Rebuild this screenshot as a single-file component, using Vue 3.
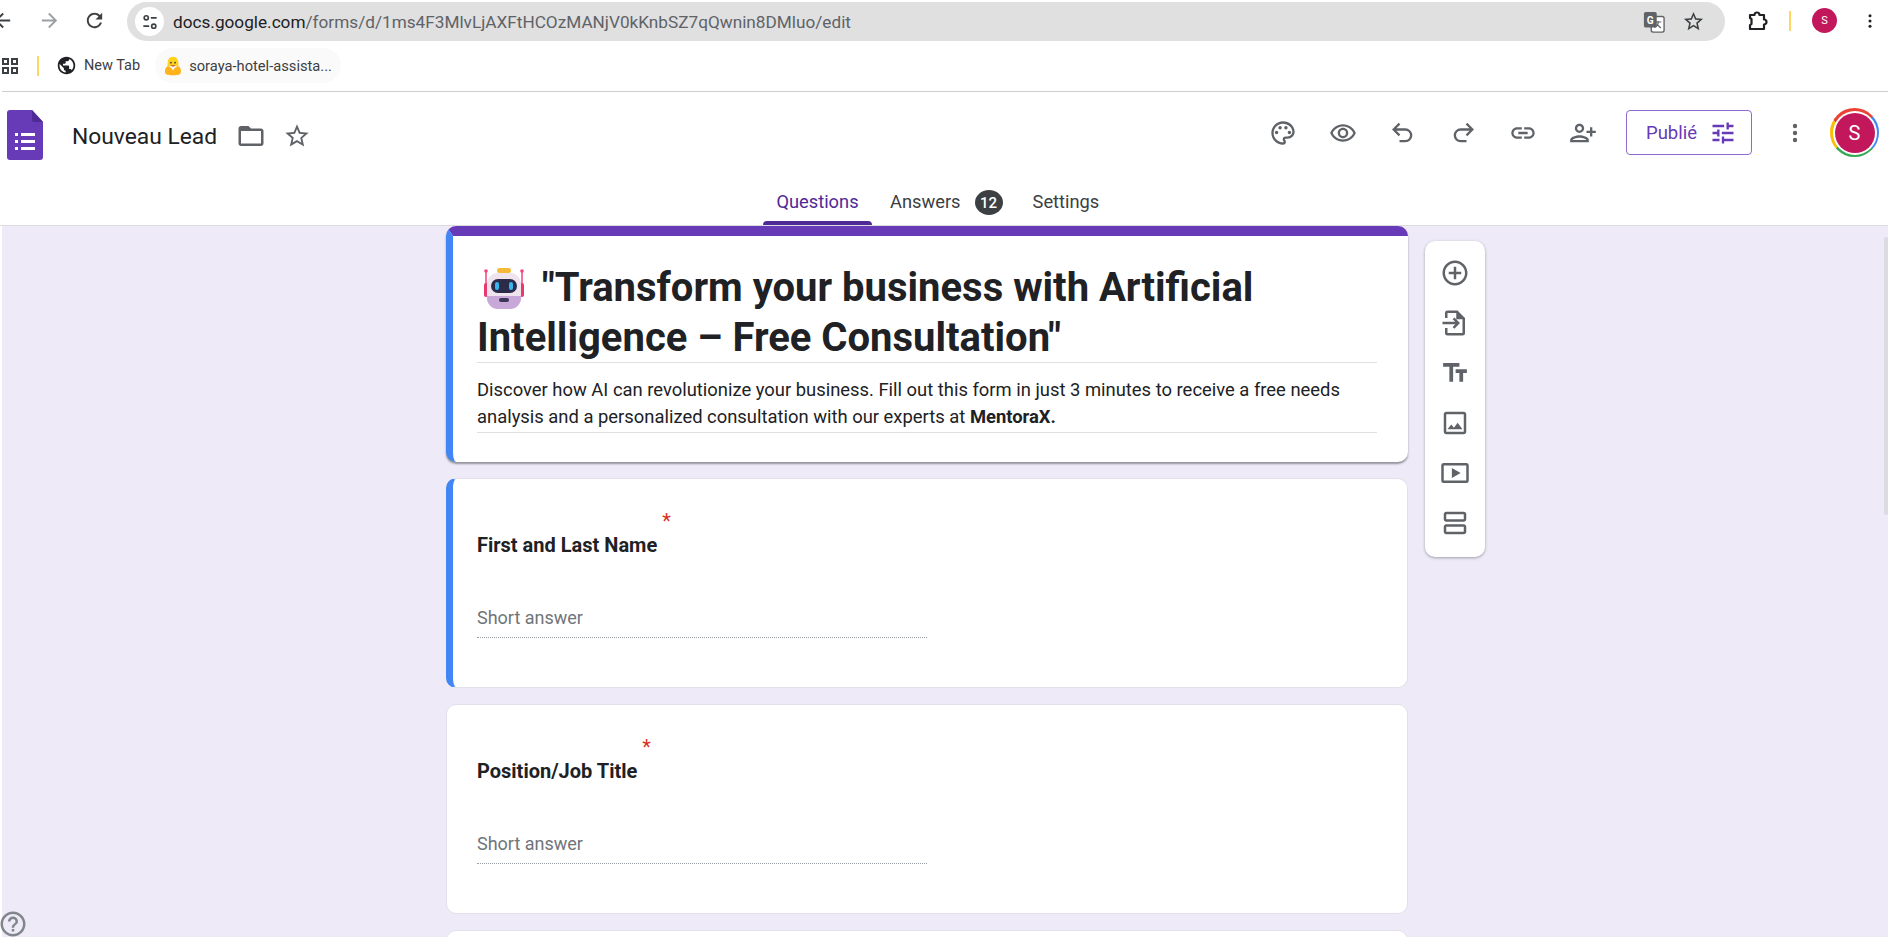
<script setup>
// Material icon paths used around the page
const ICONS = {
  back: 'M20 11H7.83l5.59-5.59L12 4l-8 8 8 8 1.41-1.41L7.83 13H20v-2z',
  forward: 'M4 11h12.17l-5.59-5.59L12 4l8 8-8 8-1.41-1.41L16.17 13H4v-2z',
  reload: 'M17.65 6.35C16.2 4.9 14.21 4 12 4c-4.42 0-7.99 3.58-7.99 8s3.57 8 7.99 8c3.73 0 6.84-2.55 7.73-6h-2.08c-.82 2.33-3.04 4-5.65 4-3.31 0-6-2.69-6-6s2.69-6 6-6c1.66 0 3.14.69 4.22 1.78L13 11h7V4l-2.35 2.35z',
  star: 'M22 9.24l-7.19-.62L12 2 9.19 8.63 2 9.24l5.46 4.73L5.82 21 12 17.27 18.18 21l-1.63-7.03L22 9.24zM12 15.4l-3.76 2.27 1-4.28-3.32-2.88 4.38-.38L12 6.1l1.71 4.04 4.38.38-3.32 2.88 1 4.28L12 15.4z',
  globe: 'M12 2C6.48 2 2 6.48 2 12s4.48 10 10 10 10-4.48 10-10S17.52 2 12 2zm-1 17.93c-3.95-.49-7-3.85-7-7.93 0-.62.08-1.21.21-1.79L9 15v1c0 1.1.9 2 2 2v1.93zm6.9-2.54c-.26-.81-1-1.39-1.9-1.39h-1v-3c0-.55-.45-1-1-1H8v-2h2c.55 0 1-.45 1-1V7h2c1.1 0 2-.9 2-2v-.41c2.93 1.19 5 4.06 5 7.41 0 2.08-.8 3.97-2.1 5.39z',
  folder: 'M20 6h-8l-2-2H4c-1.1 0-1.99.9-1.99 2L2 18c0 1.1.9 2 2 2h16c1.1 0 2-.9 2-2V8c0-1.1-.9-2-2-2zm0 12H4V8h16v10z',
  tune: 'M3 17v2h6v-2H3zM3 5v2h10V5H3zm10 16v-2h8v-2h-8v-2h-2v6h2zM7 9v2H3v2h4v2h2V9H7zm14 4v-2H11v2h10zm-6-4h2V7h4V5h-4V3h-2v6z',
  help: 'M11 18h2v-2h-2v2zm1-16C6.48 2 2 6.48 2 12s4.48 10 10 10 10-4.48 10-10S17.52 2 12 2zm0 18c-4.41 0-8-3.59-8-8s3.59-8 8-8 8 3.59 8 8-3.59 8-8 8zm0-14c-2.21 0-4 1.79-4 4h2c0-1.1.9-2 2-2s2 .9 2 2c0 2-3 1.75-3 5h2c0-2.25 3-2.5 3-5 0-2.21-1.79-4-4-4z'
}

const toolbarTop = [
  { name: 'palette', d: 'M12 22C6.49 22 2 17.51 2 12S6.49 2 12 2s10 4.04 10 9c0 3.31-2.69 6-6 6h-1.77c-.28 0-.5.22-.5.5 0 .12.05.23.13.33.41.47.64 1.06.64 1.67A2.5 2.5 0 0 1 12 22zm0-18c-4.41 0-8 3.59-8 8s3.59 8 8 8c.28 0 .5-.22.5-.5a.54.54 0 0 0-.14-.35c-.41-.46-.63-1.05-.63-1.65a2.5 2.5 0 0 1 2.5-2.5H16c2.21 0 4-1.79 4-4 0-3.86-3.59-7-8-7zM6.5 10a1.5 1.5 0 1 1 0 3 1.5 1.5 0 0 1 0-3zm3-4a1.5 1.5 0 1 1 0 3 1.5 1.5 0 0 1 0-3zm5 0a1.5 1.5 0 1 1 0 3 1.5 1.5 0 0 1 0-3zm3 4a1.5 1.5 0 1 1 0 3 1.5 1.5 0 0 1 0-3z' },
  { name: 'eye', d: 'M12 6.5c3.79 0 7.17 2.13 8.82 5.5-1.65 3.37-5.02 5.5-8.82 5.5S4.83 15.37 3.18 12C4.83 8.63 8.21 6.5 12 6.5m0-2C7 4.5 2.73 7.61 1 12c1.73 4.39 6 7.5 11 7.5s9.27-3.11 11-7.5c-1.73-4.39-6-7.5-11-7.5zm0 5a2.5 2.5 0 0 1 0 5 2.5 2.5 0 0 1 0-5m0-2c-2.48 0-4.5 2.02-4.5 4.5s2.02 4.5 4.5 4.5 4.5-2.02 4.5-4.5-2.02-4.5-4.5-4.5z' },
  { name: 'undo', d: 'M8.3 3.3l1.4 1.4L6.4 8H14a6 6 0 0 1 0 12H9v-2h5a4 4 0 0 0 0-8H6.4l3.3 3.3-1.4 1.4L2.6 9z' },
  { name: 'redo', d: 'M15.7 3.3l-1.4 1.4L17.6 8H10a6 6 0 0 0 0 12h5v-2h-5a4 4 0 0 1 0-8h7.6l-3.3 3.3 1.4 1.4L21.4 9z' },
  { name: 'link', d: 'M3.9 12c0-1.71 1.39-3.1 3.1-3.1h4V7H7c-2.76 0-5 2.24-5 5s2.24 5 5 5h4v-1.9H7c-1.71 0-3.1-1.39-3.1-3.1zM8 13h8v-2H8v2zm9-6h-4v1.9h4c1.71 0 3.1 1.39 3.1 3.1s-1.39 3.1-3.1 3.1h-4V17h4c2.76 0 5-2.24 5-5s-2.24-5-5-5z' },
  { name: 'person-add', d: 'M9 12c2.21 0 4-1.79 4-4s-1.79-4-4-4-4 1.79-4 4 1.79 4 4 4zm0-6c1.1 0 2 .9 2 2s-.9 2-2 2-2-.9-2-2 .9-2 2-2zm0 8c-2.67 0-8 1.34-8 4v2h16v-2c0-2.66-5.33-4-8-4zm-6 4c.2-.71 3.3-2 6-2 2.69 0 5.78 1.28 6 2H3zm15-3v-3h-3v-2h3V7h2v3h3v2h-3v3h-2z' }
]

const sideTools = [
  { name: 'add', d: 'M13 7h-2v4H7v2h4v4h2v-4h4v-2h-4V7zm-1-5C6.48 2 2 6.48 2 12s4.48 10 10 10 10-4.48 10-10S17.52 2 12 2zm0 18c-4.41 0-8-3.59-8-8s3.59-8 8-8 8 3.59 8 8-3.59 8-8 8z' },
  { name: 'import', d: 'M14 2H6a2 2 0 0 0-2 2v4h2V4h7v5h5v11H6v-4H4v4a2 2 0 0 0 2 2h12a2 2 0 0 0 2-2V8l-6-6zM2 11h10.2l-2.1-2.1L11.5 7.500l4.500 4.500-4.500 4.500-1.400-1.400 2.100-2.100H2z' },
  { name: 'title', d: 'M2.500 4v3h5v12h3V7h5V4h-13zm19 5h-9v3h3v7h3v-7h3V9z' },
  { name: 'image', d: 'M19 5v14H5V5h14m0-2H5c-1.100 0-2 .9-2 2v14c0 1.100.9 2 2 2h14c1.100 0 2-.9 2-2V5c0-1.100-.9-2-2-2zm-4.860 8.860l-3 3.870L9 13.140 6 17h12l-3.860-5.140z' },
  { name: 'video', d: 'M21 4H3a2 2 0 0 0-2 2v12a2 2 0 0 0 2 2h18a2 2 0 0 0 2-2V6a2 2 0 0 0-2-2zm0 14H3V6h18v12zM9.500 8v8l7-4z' },
  { name: 'section', d: 'M19 13H5c-1.100 0-2 .9-2 2v4c0 1.100.9 2 2 2h14c1.100 0 2-.9 2-2v-4c0-1.100-.9-2-2-2zm0 6H5v-4h14v4zM19 3H5c-1.100 0-2 .9-2 2v4c0 1.100.9 2 2 2h14c1.100 0 2-.9 2-2V5c0-1.100-.9-2-2-2zm0 6H5V5h14v4z' }
]

const questions = [
  { id: 1, label: 'First and Last Name', active: true },
  { id: 2, label: 'Position/Job Title', active: false }
]
</script>

<template>
  <div class="page">
    <!-- browser chrome -->
    <div class="browser-bar">
      <div class="nav-icons">
        <svg class="nav-back" viewBox="0 0 24 24"><path :d="ICONS.back" /></svg>
        <svg class="nav-forward" viewBox="0 0 24 24"><path :d="ICONS.forward" /></svg>
        <svg class="nav-reload" viewBox="0 0 24 24"><path :d="ICONS.reload" /></svg>
      </div>
      <div class="url-pill">
        <span class="site-btn">
          <svg viewBox="0 0 24 24" fill="none" stroke="#3c4043" stroke-width="2">
            <circle cx="7.500" cy="7" r="2.500" /><path d="M13 7h7M4 17h7" /><circle cx="16.500" cy="17" r="2.500" />
          </svg>
        </span>
        <span class="url"><span class="url-host">docs.google.com</span>/forms/d/1ms4F3MlvLjAXFtHCOzMANjV0kKnbSZ7qQwnin8DMluo/edit</span>
        <svg class="translate" viewBox="0 0 24 24">
          <rect x="9" y="6" width="14" height="17" rx="2" fill="#fff" stroke="#5f6368" stroke-width="1.500" />
          <rect x="1" y="1" width="14" height="17" rx="2" fill="#5f6368" />
          <text x="4" y="14" class="translate-g">G</text>
          <path d="M13 12h7M16.500 11v1.500c0 2.500-2 4.500-4 5.500M15 14.500l4.500 4" fill="none" stroke="#5f6368" stroke-width="1.300" />
        </svg>
        <svg class="pill-star" viewBox="0 0 24 24"><path :d="ICONS.star" /></svg>
      </div>
      <svg class="extension" viewBox="0 0 24 24" fill="none" stroke="#202124" stroke-width="2.200" stroke-linejoin="round">
        <path d="M5 6h4.500a2.500 2.500 0 0 1 5 0H19v4.500a2.500 2.500 0 0 1 0 5V20H5v-3.800l1.500-1.200V10L5 9z" />
      </svg>
      <span class="yellow-sep bar-sep"></span>
      <span class="mini-avatar">S</span>
      <svg class="bar-more" viewBox="0 0 24 24"><circle cx="12" cy="5" r="2" /><circle cx="12" cy="12" r="2" /><circle cx="12" cy="19" r="2" /></svg>
    </div>

    <div class="bookmarks">
      <svg class="apps" viewBox="0 0 16 16" fill="none" stroke="#3c4043" stroke-width="2">
        <rect x="1" y="1" width="5" height="5" /><rect x="10" y="1" width="5" height="5" />
        <rect x="1" y="10" width="5" height="5" /><rect x="10" y="10" width="5" height="5" />
      </svg>
      <span class="yellow-sep book-sep"></span>
      <svg class="globe" viewBox="0 0 24 24"><path :d="ICONS.globe" /></svg>
      <span class="book-text">New Tab</span>
      <div class="book-chip">
        <svg class="hug" viewBox="0 0 24 24">
          <path d="M12 1c4.500 0 6.500 3.500 6.500 8v3h-13V9c0-4.500 2-8 6.500-8z" fill="#ffd21e" />
          <circle cx="9.500" cy="8" r="1" fill="#3a3b45" /><circle cx="14.500" cy="8" r="1" fill="#3a3b45" />
          <path d="M9 11c1.200 2.200 4.800 2.200 6 0z" fill="#c9532b" />
          <path d="M3 21c-1.500-3 0-8 3-9 1.500 0 6 4 6 6 0-2 4.500-6 6-6 3 1 4.500 6 3 9-1 2-5 2-9 2s-8 0-9-2z" fill="#ffb31a" />
        </svg>
        <span class="book-text">soraya-hotel-assista...</span>
      </div>
    </div>

    <!-- forms header -->
    <header class="form-header">
      <div class="head-row">
        <svg class="forms-logo" viewBox="0 0 36 50">
          <path d="M3 0h22l11 12v35a3 3 0 0 1-3 3H3a3 3 0 0 1-3-3V3a3 3 0 0 1 3-3z" fill="#673ab7" />
          <path d="M25 0l11 12H27a2 2 0 0 1-2-2z" fill="#4f2a96" />
          <g fill="#fff">
            <rect x="8" y="23" width="3" height="3" /><rect x="14" y="23" width="14" height="3" />
            <rect x="8" y="30" width="3" height="3" /><rect x="14" y="30" width="14" height="3" />
            <rect x="8" y="37" width="3" height="3" /><rect x="14" y="37" width="14" height="3" />
          </g>
        </svg>
        <span class="doc-title">Nouveau Lead</span>
        <svg class="head-folder" viewBox="0 0 24 24"><path :d="ICONS.folder" /></svg>
        <svg class="head-star" viewBox="0 0 24 24"><path :d="ICONS.star" /></svg>
        <div class="head-tools">
          <span v-for="tool in toolbarTop" :key="tool.name" class="tool">
            <svg viewBox="0 0 24 24"><path :d="tool.d" /></svg>
          </span>
          <button class="publish">
            Publié
            <svg viewBox="0 0 24 24"><path :d="ICONS.tune" /></svg>
          </button>
          <svg class="head-more" viewBox="0 0 24 24"><circle cx="12" cy="5" r="2.200" /><circle cx="12" cy="12" r="2.200" /><circle cx="12" cy="19" r="2.200" /></svg>
          <div class="ring"><div class="ring-gap"><div class="avatar">S</div></div></div>
        </div>
      </div>
      <nav class="tabs">
        <span class="tab tab-active">Questions</span>
        <span class="tab tab-answers">Answers <span class="badge">12</span></span>
        <span class="tab tab-settings">Settings</span>
      </nav>
    </header>

    <!-- form body -->
    <main class="body">
      <div class="column">
        <section class="card title-card">
          <div class="title-inner">
            <h1 class="form-title">
              <svg class="robot" viewBox="0 0 40 42">
                <rect x="13" y="0" width="14" height="5" rx="2.500" fill="#f5b93a" />
                <path d="M2 4v14M38 4v14" stroke="#f0457a" stroke-width="1.500" />
                <circle cx="2" cy="3" r="1.800" fill="#f0457a" /><circle cx="38" cy="3" r="1.800" fill="#f0457a" />
                <rect x="0" y="15" width="4" height="14" rx="2" fill="#e8386f" /><rect x="36" y="15" width="4" height="14" rx="2" fill="#e8386f" />
                <rect x="3" y="5" width="34" height="36" rx="11" fill="#efe4ee" />
                <path d="M3 28h34v2a11 11 0 0 1-11 11H14A11 11 0 0 1 3 30z" fill="#c8a8d8" />
                <rect x="7" y="11" width="26" height="14" rx="7" fill="#2c2b4a" />
                <rect x="11" y="14" width="4" height="8" rx="2" fill="#39b6f0" /><rect x="25" y="14" width="4" height="8" rx="2" fill="#39b6f0" />
                <rect x="15" y="30" width="10" height="4" rx="2" fill="#3c3556" />
              </svg>
              "Transform your business with Artificial Intelligence – Free Consultation"
            </h1>
            <p class="form-desc">
              Discover how AI can revolutionize your business. Fill out this form in just 3 minutes to receive a free needs analysis and a personalized consultation with our experts at <b>MentoraX.</b>
            </p>
          </div>
        </section>

        <section
          v-for="q in questions"
          :key="q.id"
          class="card q-card"
          :class="{ 'q-active': q.active }"
        >
          <div class="q-label">
            <span class="q-text">{{ q.label }}</span>
            <span class="required">*</span>
          </div>
          <div class="q-answer">Short answer</div>
        </section>

        <section class="card q-card"></section>
      </div>

      <aside class="side-tools">
        <span v-for="tool in sideTools" :key="tool.name" class="side-tool">
          <svg viewBox="0 0 24 24"><path :d="tool.d" /></svg>
        </span>
      </aside>
    </main>

    <div class="scroll-thumb"></div>
    <svg class="help" viewBox="0 0 24 24"><path :d="ICONS.help" /></svg>
  </div>
</template>

<style scoped>
.page {
  position: relative;
  display: flex;
  flex-direction: column;
  width: 1888px;
  height: 937px;
  overflow: hidden;
  background: #fff;
  font-family: Roboto, "Liberation Sans", sans-serif;
  color: #202124;
}

/* browser bar */
.browser-bar {
  display: flex;
  align-items: center;
  height: 41px;
  flex-shrink: 0;
}
.nav-icons {
  display: flex;
  align-items: center;
  width: 127px;
  flex-shrink: 0;
}
.nav-icons svg { width: 23px; height: 23px; flex-shrink: 0; }
.nav-back { margin-left: -9px; fill: #3c4043; }
.nav-forward { margin-left: 24px; fill: #9aa0a6; }
.nav-reload { margin-left: 22px; fill: #3c4043; }
.url-pill {
  display: flex;
  align-items: center;
  width: 1598px;
  height: 39px;
  margin-top: 2px;
  background: #e0e0e0;
  border-radius: 20px;
  flex-shrink: 0;
}
.site-btn {
  display: flex;
  align-items: center;
  justify-content: center;
  width: 29px;
  height: 29px;
  margin-left: 8px;
  background: #fff;
  border-radius: 50%;
}
.site-btn svg { width: 20px; height: 20px; }
.url {
  margin-left: 9px;
  font-size: 17.200px;
  color: #5f6368;
  white-space: nowrap;
}
.url-host { color: #202124; }
.translate { width: 22px; height: 22px; margin-left: auto; }
.translate-g { font: 700 11px Roboto, sans-serif; fill: #fff; }
.pill-star { width: 23px; height: 23px; margin: 0 20px 0 17px; fill: #3c4043; }
.extension { width: 24px; height: 24px; margin-left: 20px; flex-shrink: 0; }
.yellow-sep { display: block; width: 2px; background: #fdd663; flex-shrink: 0; }
.bar-sep { height: 20px; margin-left: 20px; }
.mini-avatar {
  display: flex;
  align-items: center;
  justify-content: center;
  width: 25px;
  height: 25px;
  margin-left: 21px;
  background: #c2185b;
  border-radius: 50%;
  color: #fff;
  font-size: 11px;
  flex-shrink: 0;
}
.bar-more { width: 18px; height: 18px; margin-left: 24px; fill: #202124; flex-shrink: 0; }

/* bookmarks */
.bookmarks {
  display: flex;
  align-items: center;
  height: 51px;
  padding-bottom: 1px;
  box-sizing: border-box;
  margin-left: 2px;
  border-bottom: 1px solid #cfcfcf;
  flex-shrink: 0;
}
.apps { width: 16px; height: 16px; flex-shrink: 0; }
.book-sep { height: 20px; margin-left: 19px; }
.globe { width: 21px; height: 21px; margin-left: 17px; fill: #202124; }
.book-text { margin-left: 7px; font-size: 14.500px; color: #3c4043; white-space: nowrap; }
.book-chip {
  display: flex;
  align-items: center;
  width: 186px;
  height: 35px;
  margin-left: 15px;
  padding-left: 8px;
  box-sizing: border-box;
  background: #fafafa;
  border-radius: 18px;
}
.hug { width: 20px; height: 20px; flex-shrink: 0; }
.book-chip .book-text { margin-left: 6px; font-size: 14.700px; }

/* forms header */
.form-header {
  display: flex;
  flex-direction: column;
  height: 134px;
  border-bottom: 1px solid #dadce0;
  flex-shrink: 0;
  box-sizing: border-box;
}
.head-row {
  display: flex;
  align-items: center;
  height: 86px;
  padding-left: 7px;
}
.forms-logo { width: 36px; height: 50px; flex-shrink: 0; }
.doc-title { margin: 2px 0 0 29px; font-size: 22.800px; color: #202124; white-space: nowrap; }
.head-folder { width: 30px; height: 30px; margin: 2px 0 0 19px; fill: #5f6368; }
.head-star { width: 28px; height: 28px; margin: 2px 0 0 17px; fill: #5f6368; }
.head-tools { display: flex; align-items: center; margin: -5px 9px 0 auto; }
.tool { display: flex; align-items: center; justify-content: center; width: 60px; height: 40px; }
.tool svg { width: 28px; height: 28px; fill: #5f6368; }
.publish {
  display: flex;
  align-items: center;
  width: 126px;
  height: 45px;
  margin-left: 13px;
  padding: 0 0 0 19px;
  box-sizing: border-box;
  background: #fff;
  border: 1px solid #8e6bcf;
  border-radius: 4px;
  color: #673ab7;
  font: 400 18.500px Roboto, sans-serif;
}
.publish svg { width: 28px; height: 28px; margin-left: 12px; fill: #673ab7; }
.head-more { width: 24px; height: 26px; margin-left: 31px; fill: #5f6368; }
.ring {
  display: flex;
  align-items: center;
  justify-content: center;
  width: 49px;
  height: 49px;
  margin-left: 23px;
  border-radius: 50%;
  background: conic-gradient(#ea4335 0 50deg, #4285f4 50deg 130deg, #34a853 130deg 230deg, #fbbc04 230deg 300deg, #ea4335 300deg);
}
.ring-gap {
  display: flex;
  align-items: center;
  justify-content: center;
  width: 44px;
  height: 44px;
  background: #fff;
  border-radius: 50%;
}
.avatar {
  display: flex;
  align-items: center;
  justify-content: center;
  width: 40px;
  height: 40px;
  background: #c2185b;
  border-radius: 50%;
  color: #fff;
  font-size: 20px;
}
.tabs {
  display: flex;
  align-items: flex-start;
  flex: 1;
  padding-left: 763px;
}
.tab { font-size: 18.300px; color: #3c4043; line-height: 24px; padding-top: 12px; }
.tab-active {
  position: relative;
  width: 109px;
  height: 47px;
  box-sizing: border-box;
  text-align: center;
  color: #4f2a96;
}
.tab-active::after {
  content: "";
  position: absolute;
  left: 0;
  right: 0;
  bottom: 0;
  height: 4px;
  background: #4f2a96;
  border-radius: 4px 4px 0 0;
}
.tab-answers { display: flex; align-items: flex-start; margin-left: 18px; }
.badge {
  display: flex;
  align-items: center;
  justify-content: center;
  width: 28px;
  height: 25px;
  margin-left: 14px;
  background: #3c4043;
  border-radius: 50%;
  color: #fff;
  font-size: 15px;
  font-weight: 500;
}
.tab-settings { margin-left: 30px; }

/* body */
.body {
  display: flex;
  align-items: flex-start;
  flex: 1;
  min-height: 0;
  margin-left: 2px;
  padding-left: 444px;
  background: #eeeaf8;
  overflow: hidden;
}
.column {
  display: flex;
  flex-direction: column;
  gap: 16px;
  width: 962px;
  flex-shrink: 0;
}
.card {
  background: #fff;
  border-radius: 10px;
  box-sizing: border-box;
  border: 1px solid #e2e0ea;
}
.title-card {
  height: 236px;
  border: none;
  border-top: 10px solid #673ab7;
  border-left: 7px solid #4285f4;
  box-shadow: 0 2px 2px rgba(60, 64, 67, 0.5);
}
.title-inner { padding: 27px 31px 0 24px; }
.form-title {
  box-sizing: border-box;
  height: 100px;
  margin: 0;
  border-bottom: 1px solid #e0e0e0;
  font-size: 40px;
  font-weight: 700;
  line-height: 50px;
  color: #202124;
}
.robot { width: 40px; height: 42px; margin: 0 8px 0 7px; vertical-align: -9px; }
.form-desc {
  margin: 13px 0 0;
  padding-bottom: 2px;
  border-bottom: 1px solid #e0e0e0;
  font-size: 18.400px;
  line-height: 27px;
  color: #202124;
}
.form-desc b { font-weight: 700; }
.q-card {
  flex-shrink: 0;
  height: 210px;
  padding: 30px 24px 0 30px;
}
.q-active { border-left: 7px solid #4285f4; padding-left: 24px; }
.q-label {
  display: flex;
  align-items: flex-start;
  height: 36px;
  font-size: 20px;
  font-weight: 700;
  line-height: 26px;
  color: #202124;
}
.q-text { margin-top: 23px; white-space: nowrap; }
.required {
  margin: -1px 0 0 5px;
  font-size: 20px;
  font-weight: 400;
  color: #d93025;
}
.q-answer {
  width: 450px;
  margin-top: 61px;
  padding-bottom: 7px;
  border-bottom: 1px dotted #9aa0a6;
  font-size: 18px;
  line-height: 24px;
  color: #70757a;
}
.side-tools {
  display: flex;
  flex-direction: column;
  align-items: center;
  width: 60px;
  height: 316px;
  margin: 15px 0 0 17px;
  padding-top: 7px;
  box-sizing: border-box;
  background: #fff;
  border-radius: 10px;
  box-shadow: 0 1px 3px rgba(60, 64, 67, 0.45);
  flex-shrink: 0;
}
.side-tool { display: flex; align-items: center; justify-content: center; height: 50px; }
.side-tool svg { width: 30px; height: 30px; fill: #5f6368; }

/* overlays */
.scroll-thumb {
  position: absolute;
  left: 1884px;
  top: 237px;
  width: 4px;
  height: 278px;
  background: #dadce0;
  border-radius: 3px;
}
.help {
  position: absolute;
  left: -2px;
  top: 909px;
  width: 30px;
  height: 30px;
  fill: #80868b;
}
</style>
